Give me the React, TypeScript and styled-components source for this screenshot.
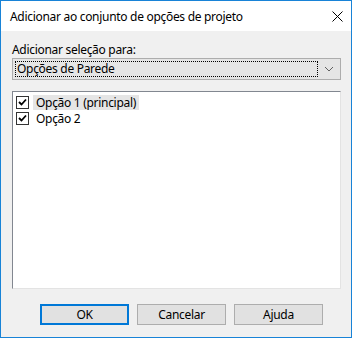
import React from "react";
import styled, { createGlobalStyle } from "styled-components";

const GlobalStyle = createGlobalStyle`
  html, body { margin: 0; padding: 0; background: #f0f0f0; }
  body { font-family: "Noto Sans", "DejaVu Sans", sans-serif; font-size: 12px; letter-spacing: -0.3px; color: #000; }
  * { box-sizing: border-box; }
`;

const Window = styled.div`
  width: 352px;
  height: 338px;
  border: 1px solid #1883d7;
  background: #f0f0f0;
  display: flex;
  flex-direction: column;
`;

const TitleBar = styled.div`
  height: 30px;
  background: #ffffff;
  display: flex;
  align-items: center;
  justify-content: space-between;
  padding: 0 9px 0 9px;
`;

const Title = styled.span`
  font-size: 12px;
  line-height: 15px;
  color: #000;
  margin-top: 1px;
`;

const CloseIcon = styled.svg`
  width: 11px;
  height: 11px;
  margin-right: -1px;
  margin-top: 0px;
`;

const Body = styled.div`
  flex: 1;
  display: flex;
  flex-direction: column;
  padding: 11px 10px 0 11px;
`;

const Label = styled.div`
  line-height: 15px;
  height: 16px;
`;

const Combo = styled.div`
  height: 22px;
  border: 1px solid #adadad;
  background: #e5e5e5;
  display: flex;
  align-items: center;
  padding: 2px;
`;

const ComboFocus = styled.div`
  flex: 1;
  height: 16px;
  border: 1px dotted #000;
  display: flex;
  align-items: center;
  padding-left: 1px;
  line-height: 14px;
`;

const ComboArrow = styled.svg`
  width: 18px;
  height: 16px;
  margin-left: 2px;
`;

const ListBox = styled.div`
  margin-top: 11px;
  height: 198px;
  background: #fff;
  border-style: solid;
  border-width: 1px;
  border-color: #828790 #e3e3e3 #e3e3e3 #828790;
  padding: 2px 3px;
  display: flex;
  flex-direction: column;
`;

const Item = styled.div`
  height: 16px;
  display: flex;
  align-items: center;
  gap: 4px;
`;

const Check = styled.span`
  width: 13px;
  height: 13px;
  border: 1px solid #333;
  background: #fff;
  display: flex;
  align-items: center;
  justify-content: center;
`;

const ItemText = styled.span<{ $selected?: boolean }>`
  background: ${(p) => (p.$selected ? "#e5e5e5" : "transparent")};
  padding: 0 3px 0 3px;
  line-height: 15px;
  height: 15px;
`;

const ButtonRow = styled.div`
  margin-top: 15px;
  display: flex;
  gap: 8px;
  padding-left: 28px;
`;

const Button = styled.button<{ $default?: boolean }>`
  width: 89px;
  height: 21px;
  background: #e1e1e1;
  border: ${(p) => (p.$default ? "2px solid #0078d7" : "1px solid #adadad")};
  font-family: inherit;
  font-size: 12px;
  letter-spacing: inherit;
  color: #000;
  padding: 0;
  line-height: 15px;
`;

const CheckMark = () => (
  <svg width="9" height="9" viewBox="0 0 9 9">
    <path d="M1 4 L3.5 6.5 L8 1.5" fill="none" stroke="#000" strokeWidth="1.8" />
  </svg>
);

export default function App() {
  return (
    <>
      <GlobalStyle />
      <Window>
        <TitleBar>
          <Title>Adicionar ao conjunto de opções de projeto</Title>
          <CloseIcon viewBox="0 0 11 11">
            <path d="M0.5 0.5 L10.5 10.5 M10.5 0.5 L0.5 10.5" stroke="#000" strokeWidth="1" />
          </CloseIcon>
        </TitleBar>
        <Body>
          <Label>Adicionar seleção para:</Label>
          <Combo>
            <ComboFocus>Opções de Parede</ComboFocus>
            <ComboArrow viewBox="0 0 18 16">
              <path d="M5 6 L9 10 L13 6" fill="none" stroke="#606060" strokeWidth="1" />
            </ComboArrow>
          </Combo>
          <ListBox>
            <Item>
              <Check><CheckMark /></Check>
              <ItemText $selected>Opção 1 (principal)</ItemText>
            </Item>
            <Item>
              <Check><CheckMark /></Check>
              <ItemText>Opção 2</ItemText>
            </Item>
          </ListBox>
          <ButtonRow>
            <Button $default>OK</Button>
            <Button>Cancelar</Button>
            <Button>Ajuda</Button>
          </ButtonRow>
        </Body>
      </Window>
    </>
  );
}
